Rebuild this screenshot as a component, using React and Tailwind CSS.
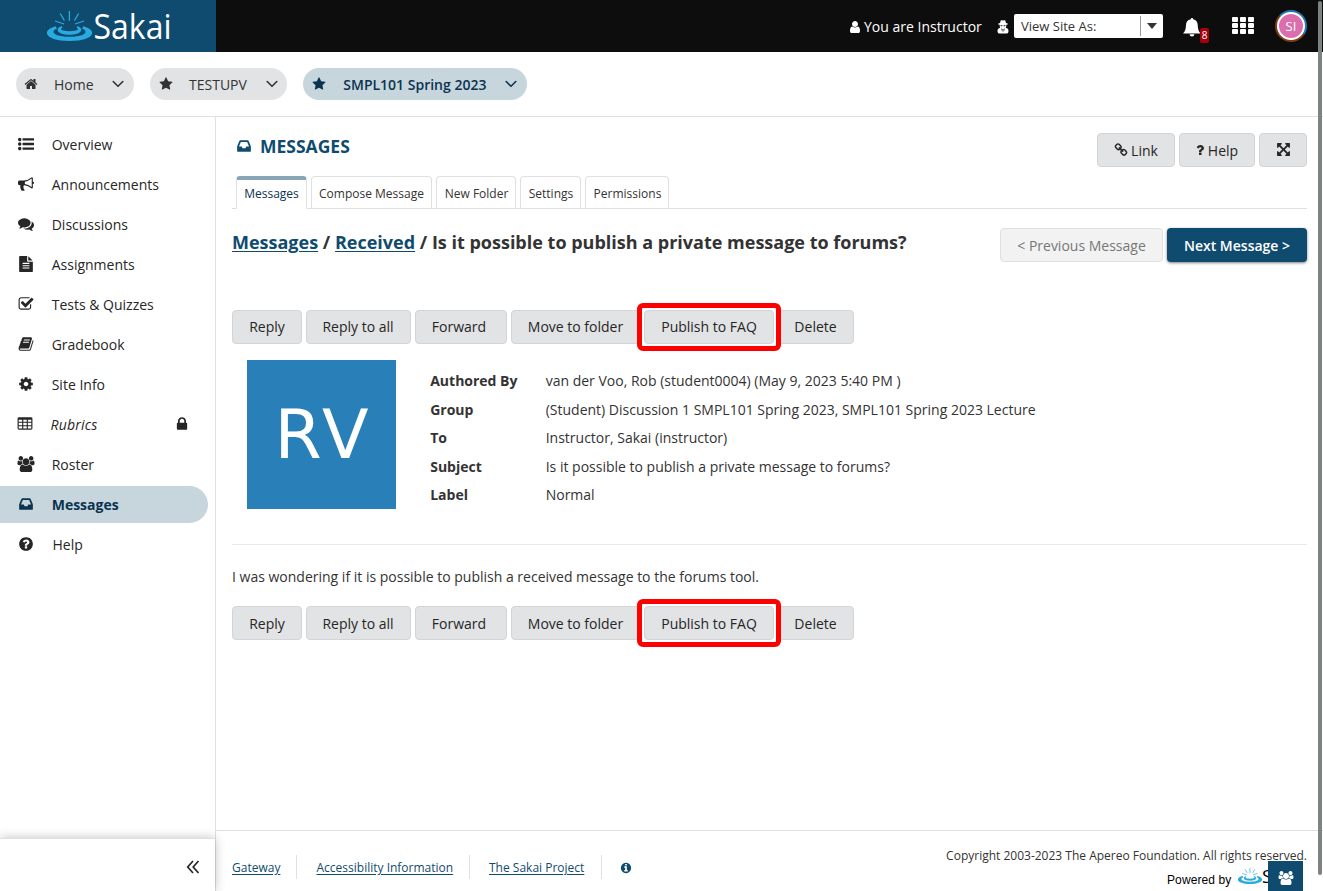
import React from "react";

const PATHS = {
  star: "M1728 647q0 22-26 48l-363 354 86 500q1 7 1 20 0 21-10.5 35.5t-30.5 14.5q-19 0-40-12l-449-236-449 236q-22 12-40 12-21 0-31.5-14.5t-10.5-35.5q0-6 2-20l86-500-364-354q-25-27-25-48 0-37 56-46l502-73 225-455q19-41 49-41t49 41l225 455 502 73q56 9 56 46z",
  home: "M1472 992v480q0 26-19 45t-45 19h-384v-384h-256v384h-384q-26 0-45-19t-19-45v-480q0-1 .5-3t.5-3l575-474 575 474q1 2 1 6zm223-69l-62 74q-8 9-21 11h-3q-13 0-21-7l-692-577-692 577q-12 8-24 7-13-2-21-11l-62-74q-8-10-7-23.5t11-21.5l719-599q32-26 76-26t76 26l244 204v-195q0-14 9-23t23-9h192q14 0 23 9t9 23v408l219 182q10 8 11 21.5t-7 23.5z",
  bullhorn: "M1664 640q53 0 90.5 37.5t37.5 90.5-37.5 90.5-90.5 37.5v384q0 52-38 90t-90 38q-417-347-812-380-58 19-91 66t-31 100.5 40 92.5q-20 33-23 65.5t6 58 33.5 55 48 50 61.5 50.5q-29 58-111.5 83t-168.5 11.5-132-55.5q-7-23-29.5-87.5t-32-94.5-23-89-15-101 3.5-98.5 22-110.5h-122q-66 0-113-47t-47-113v-192q0-66 47-113t113-47h480q435 0 896-384 52 0 90 38t38 90v384zm-128 604v-954q-394 302-768 343v270q377 42 768 341z",
  comments: "M1408 768q0 139-94 257t-256.5 186.5-353.5 68.5q-86 0-176-16-124 88-278 128-36 9-86 16h-3q-11 0-20.5-8t-11.5-21q-1-3-1-6.5t.5-6.5 2-6l2.5-5 3.5-5.5 4-5 4.5-5 4-4.5q5-6 23-25t26-29.5 22.5-29 25-38.5 20.5-44q-124-72-195-177t-71-224q0-139 94-257t256.5-186.5 353.5-68.5 353.5 68.5 256.5 186.5 94 257zm384 256q0 120-71 224.5t-195 176.5q10 24 20.5 44t25 38.5 22.5 29 26 29.5 23 25q1 1 4 4.5t4.5 5 4 5 3.5 5.5l2.5 5 2 6 .5 6.5-1 6.5q-3 14-13 22t-22 7q-50-7-86-16-154-40-278-128-90 16-176 16-271 0-472-132 58 4 88 4 161 0 309-45t264-129q125-92 192-212t67-254q0-77-23-152 129 71 204 178t75 230z",
  file: "M1596 476q14 14 28 36h-472v-472q22 14 36 28zm-476 164h544v1056q0 40-28 68t-68 28h-1344q-40 0-68-28t-28-68v-1600q0-40 28-68t68-28h800v544q0 40 28 68t68 28zm160 736v-64q0-14-9-23t-23-9h-704q-14 0-23 9t-9 23v64q0 14 9 23t23 9h704q14 0 23-9t9-23zm0-256v-64q0-14-9-23t-23-9h-704q-14 0-23 9t-9 23v64q0 14 9 23t23 9h704q14 0 23-9t9-23zm0-256v-64q0-14-9-23t-23-9h-704q-14 0-23 9t-9 23v64q0 14 9 23t23 9h704q14 0 23-9t9-23z",
  check: "M1472 930v318q0 119-84.5 203.5t-203.5 84.5h-832q-119 0-203.5-84.5t-84.5-203.5v-832q0-119 84.5-203.5t203.5-84.5h832q63 0 117 25 15 7 18 23 3 17-9 29l-49 49q-10 10-23 10-3 0-9-2-23-6-45-6h-832q-66 0-113 47t-47 113v832q0 66 47 113t113 47h832q66 0 113-47t47-113v-254q0-13 9-22l64-64q10-10 23-10 6 0 12 3 20 8 20 29zm231-489l-814 814q-24 24-57 24t-57-24l-430-430q-24-24-24-57t24-57l110-110q24-24 57-24t57 24l263 263 647-647q24-24 57-24t57 24l110 110q24 24 24 57t-24 57z",
  book: "M1703 478q40 57 18 129l-275 906q-19 64-76.5 107.5t-122.5 43.5h-923q-77 0-148.5-53.5t-99.5-131.5q-24-67-2-127 0-4 3-27t4-37q1-8-3-21.5t-3-19.5q2-11 8-21t16.5-23.5 16.5-23.5q23-38 45-91.5t30-91.5q3-10 .5-30t-.5-28q3-11 17-28t17-23q21-36 42-92t25-90q1-9-2.5-32t.5-28q4-13 22-30.5t22-22.5q19-26 42.5-84.5t27.5-96.5q1-8-3-25.5t-2-26.5q2-8 9-18t18-23 17-21q8-12 16.5-30.5t15-35 16-36 19.5-32 26.5-23.5 36-11.5 47.5 5.5l-1 3q38-9 51-9h761q74 0 114 56t18 130l-274 906q-36 119-71.5 153.5t-128.5 34.5h-869q-27 0-38 15-11 16-1 43 24 70 144 70h923q29 0 56-15.5t35-41.5l300-987q7-22 5-57 38 15 59 43zm-1064 2q-4 13 2 22.5t20 9.5h608q13 0 25.5-9.5t16.5-22.5l21-64q4-13-2-22.5t-20-9.5h-608q-13 0-25.5 9.5t-16.5 22.5zm-83 256q-4 13 2 22.5t20 9.5h608q13 0 25.5-9.5t16.5-22.5l21-64q4-13-2-22.5t-20-9.5h-608q-13 0-25.5 9.5t-16.5 22.5z",
  cog: "M1152 896q0-106-75-181t-181-75-181 75-75 181 75 181 181 75 181-75 75-181zm512-109v222q0 12-8 23t-20 13l-185 28q-19 54-39 91 35 50 107 138 10 12 10 25t-9 23q-27 37-99 108t-94 71q-12 0-26-9l-138-108q-44 23-91 38-16 136-29 186-7 28-36 28h-222q-14 0-24.5-8.5t-11.5-21.5l-28-184q-49-16-90-37l-141 107q-10 9-25 9-14 0-25-11-126-114-165-168-7-10-7-23 0-12 8-23 15-21 51-66.5t54-70.5q-27-50-41-99l-183-27q-13-2-21-12.5t-8-23.5v-222q0-12 8-23t19-13l186-28q14-46 39-92-40-57-107-138-10-12-10-24 0-10 9-23 26-36 98.5-107.5t94.5-71.5q13 0 26 10l138 107q44-23 91-38 16-136 29-186 7-28 36-28h222q14 0 24.5 8.5t11.5 21.5l28 184q49 16 90 37l142-107q9-9 24-9 13 0 25 10 129 119 165 170 7 8 7 22 0 12-8 23-15 21-51 66.5t-54 70.5q26 50 41 98l183 28q13 2 21 12.5t8 23.5z",
  table: "M224 128h1344q66 0 113 47t47 113v1088q0 66-47 113t-113 47H224q-66 0-113-47t-47-113V288q0-66 47-113t113-47zM192 416v224h384V416zM704 416v224h384V416zM1216 416v224h384V416zM192 768v256h384V768zM704 768v256h384V768zM1216 768v256h384V768zM192 1152v256h384v-256zM704 1152v256h384v-256zM1216 1152v256h384v-256z",
  lock: "M640 768h512v-192q0-106-75-181t-181-75-181 75-75 181v192zm832 96v576q0 40-28 68t-68 28h-960q-40 0-68-28t-28-68v-576q0-40 28-68t68-28h32v-192q0-184 132-316t316-132 316 132 132 316v192h32q40 0 68 28t28 68z",
  users: "M529 896q-162 5-265 128h-134q-82 0-138-40.5t-56-118.5q0-353 124-353 6 0 43.5 21t97.5 42.5 119 21.5q67 0 133-23-5 37-5 66 0 139 81 256zm1071 637q0 120-73 189.5t-194 69.5h-874q-121 0-194-69.5t-73-189.5q0-53 3.5-103.5t14-109 26.5-108.5 43-97.5 62-81 85.5-53.5 111.5-20q10 0 43 21.5t73 48 107 48 135 21.5 135-21.5 107-48 73-48 43-21.5q61 0 111.5 20t85.5 53.5 62 81 43 97.5 26.5 108.5 14 109 3.5 103.5zm-1024-1277q0 106-75 181t-181 75-181-75-75-181 75-181 181-75 181 75 75 181zm704 384q0 159-112.5 271.5t-271.5 112.5-271.5-112.5-112.5-271.5 112.5-271.5 271.5-112.5 271.5 112.5 112.5 271.5zm576 225q0 78-56 118.5t-138 40.5h-134q-103-123-265-128 81-117 81-256 0-29-5-66 66 23 133 23 59 0 119-21.5t97.5-42.5 43.5-21q124 0 124 353zm-128-609q0 106-75 181t-181 75-181-75-75-181 75-181 181-75 181 75 75 181z",
  inbox: "M1151 960h316q-1-3-2.5-8.5t-2.5-7.5l-212-496h-708l-212 496q-1 3-2.5 8.5t-2.5 7.5h316l95 192h320zm513 30v482q0 26-19 45t-45 19h-1408q-26 0-45-19t-19-45v-482q0-62 25-123l238-552q10-25 36.5-42t52.5-17h832q26 0 52.5 17t36.5 42l238 552q25 61 25 123z",
  questionCircle: "M1024 1376v-192q0-14-9-23t-23-9h-192q-14 0-23 9t-9 23v192q0 14 9 23t23 9h192q14 0 23-9t9-23zm256-672q0-88-55.5-163t-138.5-116-170-41q-243 0-371 213-15 24 8 42l132 100q7 6 19 6 16 0 25-12 53-68 86-92 34-24 86-24 48 0 85.5 26t37.5 59q0 38-20 61t-68 45q-63 28-115.5 86.5t-52.5 125.5v36q0 14 9 23t23 9h192q14 0 23-9t9-23q0-19 21.5-49.5t54.5-49.5q32-18 49-28.5t46-35 44.5-48 28-60.5 12.5-81zm384 192q0 209-103 385.5t-279.5 279.5-385.5 103-385.5-103-279.5-279.5-103-385.5 103-385.5 279.5-279.5 385.5-103 385.5 103 279.5 279.5 103 385.5z",
  question: "M1088 1256v240q0 16-12 28t-28 12h-240q-16 0-28-12t-12-28v-240q0-16 12-28t28-12h240q16 0 28 12t12 28zm316-600q0 54-15.5 101t-35 76.5-55 59.5-57.5 43.5-61 35.5q-41 23-68.5 65t-27.5 67q0 17-12 32.5t-28 15.5h-240q-15 0-25.5-18.5t-10.5-37.5v-45q0-83 65-156.5t143-108.5q59-27 84-56t25-76q0-42-46.5-74t-107.5-32q-65 0-108 29-35 25-107 115-13 16-31 16-12 0-25-8l-164-125q-13-10-15.5-25t5.5-28q160-266 464-266 80 0 161 31t146 83 106 127.5 41 158.5z",
  link: "M1520 1216q0-40-28-68l-208-208q-28-28-68-28-42 0-72 32 3 3 19 18.5t21.5 21.5 15 19 13 25.5 3.5 27.5q0 40-28 68t-68 28q-15 0-27.5-3.5t-25.5-13-19-15-21.5-21.5-18.5-19q-33 31-33 73 0 40 28 68l206 207q27 27 68 27 40 0 68-26l147-146q28-28 28-67zm-703-705q0-40-28-68l-206-207q-28-28-68-28-39 0-68 27l-147 146q-28 28-28 67 0 40 28 68l208 208q27 27 68 27 42 0 72-31-3-3-19-18.5t-21.5-21.5-15-19-13-25.5-3.5-27.5q0-40 28-68t68-28q15 0 27.5 3.5t25.5 13 19 15 21.5 21.5 18.5 19q33-31 33-73zm895 705q0 120-85 203l-147 146q-83 83-203 83-121 0-204-85l-206-207q-83-83-83-203 0-123 88-209l-88-88q-86 88-208 88-120 0-204-84l-208-208q-84-84-84-204t85-203l147-146q83-83 203-83 121 0 204 85l206 207q83 83 83 203 0 123-88 209l88 88q86-88 208-88 120 0 204 84l208 208q84 84 84 204z",
  arrows: "M1411 541l-355 355 355 355 144-144q29-31 70-14 39 17 39 59v448q0 26-19 45t-45 19h-448q-42 0-59-40-17-39 14-69l144-144-355-355-355 355 144 144q31 30 14 69-17 40-59 40h-448q-26 0-45-19t-19-45v-448q0-42 40-59 39-17 69 14l144 144 355-355-355-355-144 144q-19 19-45 19-12 0-24-5-40-17-40-59v-448q0-26 19-45t45-19h448q42 0 59 40 17 39-14 69l-144 144 355 355 355-355-144-144q-31-30-14-69 17-40 59-40h448q26 0 45 19t19 45v448q0 42-39 59-13 5-25 5-26 0-45-19z",
  user: "M1536 1399q0 109-62.5 187t-150.5 78h-854q-88 0-150.5-78t-62.5-187q0-85 8.5-160.5t31.5-152 58.5-131 94-89 134.5-34.5q131 128 313 128t313-128q76 0 134.5 34.5t94 89 58.5 131 31.5 152 8.5 160.5zm-256-887q0 159-112.5 271.5t-271.5 112.5-271.5-112.5-112.5-271.5 112.5-271.5 271.5-112.5 271.5 112.5 112.5 271.5z",
  info: "M1152 1376v-160q0-14-9-23t-23-9h-96v-512q0-14-9-23t-23-9h-320q-14 0-23 9t-9 23v160q0 14 9 23t23 9h96v320h-96q-14 0-23 9t-9 23v160q0 14 9 23t23 9h448q14 0 23-9t9-23zm-128-896v-160q0-14-9-23t-23-9h-192q-14 0-23 9t-9 23v160q0 14 9 23t23 9h192q14 0 23-9t9-23zm640 416q0 209-103 385.5t-279.5 279.5-385.5 103-385.5-103-279.5-279.5-103-385.5 103-385.5 279.5-279.5 385.5-103 385.5 103 279.5 279.5 103 385.5z",
  list: "M384 1408q0 80-56 136t-136 56-136-56-56-136 56-136 136-56 136 56 56 136zm0-512q0 80-56 136t-136 56-136-56-56-136 56-136 136-56 136 56 56 136zm1408 416v192q0 13-9.5 22.5t-22.5 9.5h-1216q-13 0-22.5-9.5t-9.5-22.5v-192q0-13 9.5-22.5t22.5-9.5h1216q13 0 22.5 9.5t9.5 22.5zm-1408-928q0 80-56 136t-136 56-136-56-56-136 56-136 136-56 136 56 56 136zm1408 416v192q0 13-9.5 22.5t-22.5 9.5h-1216q-13 0-22.5-9.5t-9.5-22.5v-192q0-13 9.5-22.5t22.5-9.5h1216q13 0 22.5 9.5t9.5 22.5zm0-512v192q0 13-9.5 22.5t-22.5 9.5h-1216q-13 0-22.5-9.5t-9.5-22.5v-192q0-13 9.5-22.5t22.5-9.5h1216q13 0 22.5 9.5t9.5 22.5z",
};

function Icon({ name, className = "size-4" }) {
  return (
    <svg viewBox="0 0 1792 1792" className={`shrink-0 overflow-visible ${className}`} fill="currentColor" fillRule={name === "table" ? "evenodd" : "nonzero"}>
      <path d={PATHS[name]} />
    </svg>
  );
}

function Chevron() {
  return (
    <svg viewBox="0 0 12 8" className="h-2 w-3 shrink-0" fill="none" stroke="currentColor" strokeWidth="1.600" strokeLinecap="round" strokeLinejoin="round">
      <path d="M1.200 1.500L6 6.300l4.800-4.800" />
    </svg>
  );
}

function Ripple({ className }) {
  return (
    <svg viewBox="0 0 45 30" className={className} fill="#29abe2">
      <path d="M8.500 15.200C-7 19.500-1.500 30 22.500 30S52 19.500 36.500 15.200L35 17.400C42 20 39 25.700 22.500 25.700S3 20 10 17.400Z" />
      <path d="M14.500 15C7 18.200 11 23.800 22.500 23.800S38 18.200 30.500 15L29.500 16.600C33 18.400 30 20.200 22.500 20.200S12 18.400 15.500 16.600Z" />
      <path d="M22.400 0v9.700M31.600 2.500L27.400 9.500M37 10l-9 3M13.200 2.500L17.400 9.500M8 10l9 3" stroke="#29abe2" strokeWidth="1.300" />
    </svg>
  );
}

const NAV = [
  ["list", "Overview"],
  ["bullhorn", "Announcements"],
  ["comments", "Discussions"],
  ["file", "Assignments"],
  ["check", "Tests & Quizzes"],
  ["book", "Gradebook"],
  ["cog", "Site Info"],
  ["table", "Rubrics"],
  ["users", "Roster"],
  ["inbox", "Messages"],
  ["questionCircle", "Help"],
];

const NAV_ICON = {
  list: "-mt-0.5 size-4",
  bullhorn: "-mt-0.5 size-4",
  comments: "-mt-px size-4",
  file: "-mt-px size-4",
  check: "-mt-px size-4",
  book: "-mt-px size-4",
  cog: "-mt-px size-4",
  table: "-mt-px -ml-px size-4",
  users: "-mt-0.5 size-4",
  inbox: "-mt-px size-4",
  questionCircle: "-mt-px mr-[0.5px] size-4",
};

const FIELDS = [
  ["Authored By", "van der Voo, Rob (student0004) (May 9, 2023 5:40 PM )"],
  ["Group", "(Student) Discussion 1 SMPL101 Spring 2023, SMPL101 Spring 2023 Lecture"],
  ["To", "Instructor, Sakai (instructor)"],
  ["Subject", "Is it possible to publish a private message to forums?"],
  ["Label", "Normal"],
];

const BTN = "flex h-[34px] shrink-0 items-center justify-center rounded border border-[#d3d4d6] bg-[#e1e3e5] whitespace-nowrap text-[#262626]";

function Actions({ textClass = "" }) {
  return (
    <div className="flex gap-1">
      <button className={`${BTN} w-[70px] ${textClass}`}>Reply</button>
      <button className={`${BTN} w-[105px] pr-px ${textClass}`}>Reply to all</button>
      <button className={`${BTN} w-[92px] pr-1 ${textClass}`}>Forward</button>
      <button className={`${BTN} w-[129px] ${textClass}`}>Move to folder</button>
      <div className="relative">
        <div className="absolute -inset-x-[7px] -inset-y-[7px] rounded-md border-[5px] border-[#fe0000] bg-white" />
        <button className={`${BTN} relative w-[130px] ${textClass}`}>Publish to FAQ</button>
      </div>
      <button className={`${BTN} w-[76px] pr-px ${textClass}`}>Delete</button>
    </div>
  );
}

function Header() {
  return (
    <header className="flex h-[52px] shrink-0 bg-[#0d0d0d] text-white">
      <div className="w-[216px] bg-[#0f4b6f] pt-[11px] pl-[47px]">
        <div className="flex">
          <Ripple className="h-[30px] w-[45px]" />
          <svg viewBox="0 0 80 34" className="h-[34px] w-20 overflow-visible">
            <text x="1.500" y="27.800" textLength="78" lengthAdjust="spacingAndGlyphs" fill="#fff" fontFamily="Open Sans, sans-serif" fontSize="35">Sakai</text>
          </svg>
        </div>
      </div>
      <div className="flex flex-1 items-center justify-end pr-4">
        <Icon name="user" className="mt-px size-[14px]" />
        <span className="ml-[2px] w-[118px] pt-[2px] whitespace-nowrap">You are Instructor</span>
        <svg viewBox="0 0 12 14" className="mt-[2px] ml-[15px] h-[14px] w-3" fill="#fff">
          <path d="M3.800.3Q4.900-.1 6 .5 7.100-.1 8.200.3L9 3q2 .4 2 .9 0 .6-1.700.9v1.500q0 .8-.6 1.500 2.800.6 2.800 3.200 0 2.500-1.700 2.500H2.200Q.5 13.500.5 11q0-2.600 2.800-3.200-.6-.7-.6-1.500V4.800Q1 4.500 1 3.900q0-.5 2-.9z" />
          <path d="M3.400 5.200h2.100l-.3 1H3.800zM6.500 5.200h2.100l-.4 1H6.800zM4.300 8.200l1.300 1-.5 3zM7.700 8.200l-1.300 1 .5 3z" fill="#111" />
        </svg>
        <div className="ml-[5px] flex h-6 w-[149px] items-center rounded-[2px] bg-white text-[13px] text-[#333]">
          <span className="flex-1 pl-[7px]">View Site As:</span>
          <span className="flex h-5 w-[23px] items-center justify-center border-l border-[#999]">
            <svg viewBox="0 0 10 6" className="h-1.5 w-2.5" fill="#333"><path d="M0 0h10L5 6z" /></svg>
          </span>
        </div>
        <div className="relative mt-px ml-5 size-[18px]">
          <svg viewBox="0 0 18 19" className="h-[19px] w-[18px]" fill="#fff">
            <path d="M9 0a1.200 1.200 0 011.200 1.300C13.200 2 14.600 4.300 14.700 7c.1 4 1 6.500 3 8.500H0c2-2 2.900-4.500 3-8.500.1-2.700 1.500-5 4.800-5.700A1.200 1.200 0 019 0zM6.600 16.200h4.800a2.400 2.400 0 01-4.800 0z" />
          </svg>
          <span className="absolute top-[10px] left-[17px] flex h-[15px] w-[9px] items-center justify-center rounded-[2px] bg-[#a8000b] text-[10px]">8</span>
        </div>
        <svg viewBox="0 0 22 17" className="-mt-px ml-[31px] h-[17px] w-[22px]" fill="#fff">
          {[0, 8, 16].map((x) => [0, 6, 12].map((y) => <rect key={`${x}-${y}`} x={x} y={y} width="6" height="5" rx="1" />))}
        </svg>
        <div className="ml-[21px] size-8 rounded-full bg-[conic-gradient(from_-45deg,#2278b4_0_47%,#7c3d10_47%_100%)] p-[2px]">
          <div className="flex size-full items-center justify-center rounded-full border-2 border-white bg-[#db6fae] text-[13px] text-white">SI</div>
        </div>
      </div>
    </header>
  );
}

function Sidebar() {
  return (
    <aside className="flex w-[216px] shrink-0 flex-col border-r border-[#e0e0e0] text-[#262626]">
      <nav className="flex flex-1 flex-col gap-[3px] pt-[9px]">
        {NAV.map(([icon, label]) => (
          <a
            key={label}
            className={`flex h-[37px] w-[208px] items-center pl-[18px] ${label === "Messages" ? "rounded-r-full bg-[#c7d5dd] font-bold text-[#0b3350]" : ""} ${label === "Rubrics" ? "italic" : ""}`}
          >
            <Icon name={icon} className={NAV_ICON[icon]} />
            <span className={`flex-1 ${label === "Rubrics" ? "pl-[17.5px] tracking-[0.2px]" : label === "Help" ? "pl-[18px]" : "pl-[17.7px]"}`}>{label}</span>
            {label === "Rubrics" && <Icon name="lock" className="-mt-px mr-[18px] size-4" />}
          </a>
        ))}
      </nav>
      <div className="flex h-[53px] items-center justify-end border-t border-[#e0e0e0] bg-white pt-1 pr-[15px] shadow-[0_0_10px_rgba(0,0,0,0.25)]">
        <svg viewBox="0 0 14 14" className="size-[14px]" fill="none" stroke="#262626" strokeWidth="1.700">
          <path d="M7 1L1.700 7 7 13M12.500 1L7.200 7l5.300 6" />
        </svg>
      </div>
    </aside>
  );
}

function Footer() {
  return (
    <footer className="flex h-[61px] shrink-0 justify-between border-t border-[#e0e0e0] pr-4 pl-4 text-[12px]">
      <div className="mt-6 flex h-6 items-center self-start text-[#0f4b6f]">
        <a className="w-12 pt-[2px] underline underline-offset-2">Gateway</a>
        <span className="ml-4 h-6 border-l border-[#e0e0e0]" />
        <a className="ml-[19.5px] w-[136.5px] pt-[2px] whitespace-nowrap underline underline-offset-2">Accessibility Information</a>
        <span className="ml-4 h-6 border-l border-[#e0e0e0]" />
        <a className="ml-[19px] w-24 pt-[2px] whitespace-nowrap underline underline-offset-2">The Sakai Project</a>
        <span className="ml-4 h-6 border-l border-[#e0e0e0]" />
        <Icon name="info" className="mt-px ml-[18px] size-3" />
      </div>
      <div className="flex flex-col items-end pt-4 text-[#333]">
        <span className="leading-[17px]">Copyright 2003-2023 The Apereo Foundation. All rights reserved.</span>
        <div className="flex h-[27px] w-[140px]">
          <span className="w-16 shrink-0 pt-2 font-['Liberation_Sans',sans-serif] text-[12px] leading-4 tracking-[0.1px] whitespace-nowrap text-black">Powered by</span>
          <Ripple className="mt-1 ml-[7px] h-4 w-6 shrink-0" />
          <span className="w-10 text-[19px] leading-[25px] tracking-[-1.2px] text-black">Sakai</span>
        </div>
      </div>
    </footer>
  );
}

export default function App() {
  return (
    <div className="relative flex h-[891px] w-[1323px] flex-col overflow-hidden bg-white font-['Open_Sans',sans-serif] text-[14px] leading-5 text-[#333]">
      <Header />
      <div className="flex h-[65px] shrink-0 items-center gap-4 border-b border-[#e0e0e0] px-4">
        <div className="flex h-8 w-[118px] items-center rounded-full bg-[#e1e3e5] px-[9px]">
          <Icon name="home" className="mr-px -ml-px size-[14px]" />
          <span className="flex-1 pt-[2px] pl-[15px]">Home</span>
          <span className="pr-[1.5px]"><Chevron /></span>
        </div>
        <div className="flex h-8 w-[137px] items-center rounded-full bg-[#e1e3e5] px-[9px]">
          <Icon name="star" className="size-[14px]" />
          <span className="flex-1 pt-[2px] pl-4">TESTUPV</span>
          <span className="pr-[0.5px]"><Chevron /></span>
        </div>
        <div className="flex h-8 w-56 items-center rounded-full bg-[#c7d5dd] px-[9px] font-semibold text-[#0b3350]">
          <Icon name="star" className="size-[14px]" />
          <span className="flex-1 pt-[2px] pl-[17.3px]">SMPL101 Spring 2023</span>
          <span className="pr-[1.5px]"><Chevron /></span>
        </div>
      </div>
      <div className="flex min-h-0 flex-1">
        <Sidebar />
        <div className="flex min-w-0 flex-1 flex-col">
          <main className="flex-1 pr-4 pl-4">
            <div className="flex h-[59px] items-start justify-between pt-4">
              <h1 className="flex items-center pl-1 text-[17.5px] leading-6 font-bold text-[#0f4b6f]">
                <Icon name="inbox" className="mr-2 size-4" />
                <span className="pt-px">MESSAGES</span>
              </h1>
              <div className="flex gap-1">
                <button className={`${BTN} w-[78px] gap-[3px]`}><Icon name="link" className="-mt-px size-[14px]" /><span className="pt-[2px]">Link</span></button>
                <button className={`${BTN} w-[76px] gap-[1px] pr-[3px]`}><Icon name="question" className="-mt-px size-[14px]" /><span className="pt-[2px]">Help</span></button>
                <button className={`${BTN} w-12`}><Icon name="arrows" className="-mt-0.5 size-[15px]" /></button>
              </div>
            </div>
            <div className="flex h-[33px] items-stretch gap-1 border-b border-[#e0e0e0] pl-1 text-[12px]">
              <a className="-mb-px w-[71px] rounded-t border border-t-4 border-[#e0e0e0] border-t-[#87a5b7] border-b-white bg-white pt-[3px] text-center leading-[22px] text-[#0b3350]">Messages</a>
              <a className="w-[121px] rounded-t border border-b-0 border-[#e0e0e0] pt-[6px] text-center leading-[22px] whitespace-nowrap">Compose Message</a>
              <a className="w-20 rounded-t border border-b-0 border-[#e0e0e0] pt-[6px] pl-px text-center leading-[22px] whitespace-nowrap">New Folder</a>
              <a className="w-[61px] rounded-t border border-b-0 border-[#e0e0e0] pt-[6px] pl-px text-center leading-[22px]">Settings</a>
              <a className="w-[84px] rounded-t border border-b-0 border-[#e0e0e0] pt-[6px] pl-px text-center leading-[22px]">Permissions</a>
            </div>
            <div className="flex h-[101px] items-start justify-between pt-[19px]">
              <h2 className="pt-[2px] text-[18px] leading-6 font-bold whitespace-nowrap text-[#333]">
                <a className="text-[#0f4b6f] underline underline-offset-2">Messages</a> / <a className="text-[#0f4b6f] underline underline-offset-2">Received</a> / Is it possible to publish a private message to forums?
              </h2>
              <div className="flex gap-1">
                <button className="h-[34px] w-[163px] rounded border border-[#e0e0e0] bg-[#f2f2f2] pt-[2px] text-[#777]">&lt; Previous Message</button>
                <button className="h-[34px] w-[140px] rounded bg-[#0f4b6f] pt-[2px] font-semibold text-white shadow-[0_1px_3px_rgba(0,0,0,0.5)]">Next Message &gt;</button>
              </div>
            </div>
            <Actions />
            <div className="flex h-[201px] border-b border-[#e8e8e8] pt-4 pl-[15px]">
              <div className="flex size-[149px] shrink-0 items-center justify-center bg-[#297fb8] pb-[1px] pl-1 font-['DejaVu_Sans',sans-serif] text-[68px] leading-[149px] tracking-[4px] text-white">RV</div>
              <dl className="pt-[7px] pl-[34.2px]">
                {FIELDS.map(([k, v]) => (
                  <div key={k} className="flex h-[28.500px] leading-7">
                    <dt className="w-[115.500px] font-bold">{k}</dt>
                    <dd className="whitespace-nowrap">{v}</dd>
                  </div>
                ))}
              </dl>
            </div>
            <p className="h-[61px] pt-[22px]">I was wondering if it is possible to publish a received message to the forums tool.</p>
            <Actions textClass="pt-[2px]" />
          </main>
          <Footer />
        </div>
      </div>
      <div className="absolute right-0 bottom-0 h-[891px] w-[5px] bg-transparent">
        <div className="mt-px h-[874px] w-1 rounded-full bg-[#7e8381]" />
      </div>
      <div className="absolute top-[861px] left-[1268px] flex h-[30px] w-[35px] items-center justify-center bg-[#0f4b6f] pt-1 text-white">
        <Icon name="users" className="size-[14px]" />
      </div>
    </div>
  );
}
